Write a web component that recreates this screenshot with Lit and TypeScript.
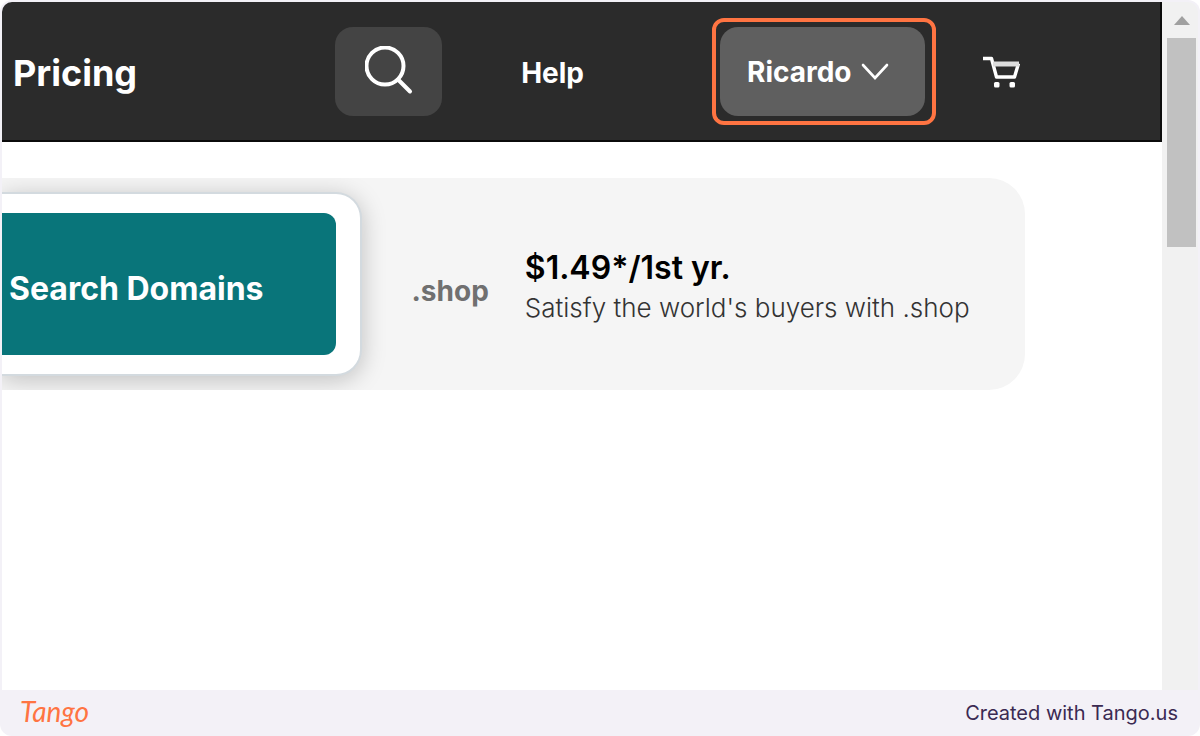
import { LitElement, html, css } from "lit";
import { customElement } from "lit/decorators.js";

@customElement("site-header")
class SiteHeader extends LitElement {
  static styles = css`
    :host {
      display: block;
    }
    .bar {
      box-sizing: border-box;
      display: flex;
      align-items: center;
      height: 140px;
      padding: 0 140px 0 11px;
      background: #2b2b2b;
      border-bottom: 2px solid #0b0b0b;
      border-right: 2px solid #0b0b0b;
      color: #fff;
      font-weight: 700;
    }
    .link {
      padding-top: 4px;
      color: inherit;
      text-decoration: none;
      font-size: 28px;
      line-height: 40px;
    }
    .pricing {
      flex: 1;
      font-size: 36px;
    }
    button {
      display: flex;
      align-items: center;
      height: 89px;
      border: 0;
      border-radius: 18px;
      color: inherit;
      font: inherit;
    }
    .search {
      justify-content: center;
      width: 107px;
      margin-right: 79px;
      background: #444;
    }
    .outline {
      margin: 0 46px 0 128px;
      padding: 5px 7px 5px 4px;
      border: 4px solid #ff7442;
      border-radius: 12px;
    }
    .account {
      gap: 9px;
      width: 205px;
      padding: 2px 0 0 27px;
      background: #5f5f5f;
      font-size: 28px;
    }
    svg {
      display: block;
      fill: none;
      stroke: #fff;
    }
  `;
  render() {
    return html`
      <nav class="bar">
        <a class="link pricing" href="#pricing">Pricing</a>
        <button class="search" aria-label="Search">
          <svg width="48" height="50" viewBox="0 0 48 50" stroke-width="4" stroke-linecap="round">
            <circle cx="20" cy="20" r="18.5" />
            <path d="M33 33.500 45 45.500" />
          </svg>
        </button>
        <a class="link" href="#help">Help</a>
        <div class="outline">
          <button class="account">
            Ricardo
            <svg width="28" height="18" viewBox="0 0 28 18" stroke-width="2.6" stroke-linecap="round">
              <path d="m2 2 12 13L26 2" />
            </svg>
          </button>
        </div>
        <a class="link" href="#cart" aria-label="Cart">
          <svg width="38" height="34" viewBox="0 0 38 34" stroke-linejoin="round">
            <path d="M1 2.500h8.500l5 18.500h18l4-13.500" stroke-width="3.4" />
            <path d="M11 8h26" stroke-width="5" stroke="#ddd" />
            <rect x="12" y="26" width="5.500" height="5.500" rx="1.500" fill="#fff" stroke="none" />
            <rect x="27.500" y="26" width="5.500" height="5.500" rx="1.500" fill="#fff" stroke="none" />
          </svg>
        </a>
      </nav>
    `;
  }
}

@customElement("domain-offer")
class DomainOffer extends LitElement {
  static styles = css`
    :host {
      display: block;
    }
    .band {
      display: flex;
      align-items: center;
      height: 212px;
      margin-right: 137px;
      overflow: hidden;
      border-radius: 0 36px 36px 0;
      background: #f5f5f5;
    }
    .field {
      padding: 19px 24px 19px 0;
      border: 2px solid #d3dadf;
      border-left: 0;
      border-radius: 0 26px 26px 0;
      background: #fff;
      box-shadow: 0 4px 24px rgb(0 0 0 / 22%);
    }
    button {
      display: block;
      height: 142px;
      padding: 8px 72px 0 7px;
      border: 0;
      border-radius: 0 12px 12px 0;
      background: #09757a;
      color: #fff;
      font: inherit;
      font-size: 32px;
      font-weight: 700;
      white-space: nowrap;
    }
    .tld {
      margin: 14px 36px 0 50px;
      color: #707070;
      font-size: 28px;
      font-weight: 700;
      line-height: 36px;
    }
    .copy {
      padding-top: 8px;
      white-space: nowrap;
      color: #333;
      font-size: 26px;
      font-weight: 300;
      line-height: 40px;
    }
    .price {
      color: #000;
      font-size: 32px;
      font-weight: 600;
    }
    p {
      margin: 0;
    }
  `;
  render() {
    return html`
      <section class="band">
        <div class="field"><button>Search Domains</button></div>
        <div class="tld">.shop</div>
        <div class="copy">
          <p class="price">$1.49*/1st yr.</p>
          <p>Satisfy the world's buyers with .shop</p>
        </div>
      </section>
    `;
  }
}

@customElement("app-root")
class AppRoot extends LitElement {
  static styles = css`
    :host {
      display: block;
      background: #fff;
      font-family: Inter, sans-serif;
    }
    .frame {
      box-sizing: border-box;
      display: flex;
      flex-direction: column;
      min-height: 100vh;
      padding: 2px 2px 0;
      overflow: hidden;
      border-radius: 12px;
      background: #f3f1f7;
    }
    .shot {
      display: flex;
      flex: 1;
      overflow: hidden;
      border-radius: 10px 10px 0 0;
    }
    .page {
      flex: 1;
      background: #fff;
    }
    .offer {
      margin-top: 36px;
    }
    .track {
      width: 29px;
      padding: 14px 2px 0 5px;
      background: #f1f1f1;
    }
    .arrow {
      display: block;
      margin: 0 auto 13px;
      fill: #a0a0a0;
    }
    .thumb {
      height: 209px;
      background: #c1c1c1;
    }
    footer {
      display: flex;
      align-items: center;
      justify-content: space-between;
      height: 46px;
      padding: 0 20px 0 18px;
      color: #3b2a52;
      font-size: 20px;
    }
    .brand {
      padding-bottom: 4px;
      color: #ff7442;
      font-family: Lato, sans-serif;
      font-size: 28px;
      font-style: italic;
      font-weight: 400;
    }
  `;
  render() {
    return html`
      <div class="frame">
        <div class="shot">
          <main class="page">
            <site-header></site-header>
            <domain-offer class="offer"></domain-offer>
          </main>
          <div class="track">
            <svg class="arrow" width="16" height="9" viewBox="0 0 16 9"><path d="M8 0l8 9H0z" /></svg>
            <div class="thumb"></div>
          </div>
        </div>
        <footer>
          <span class="brand">Tango</span>
          <span>Created with Tango.us</span>
        </footer>
      </div>
    `;
  }
}
